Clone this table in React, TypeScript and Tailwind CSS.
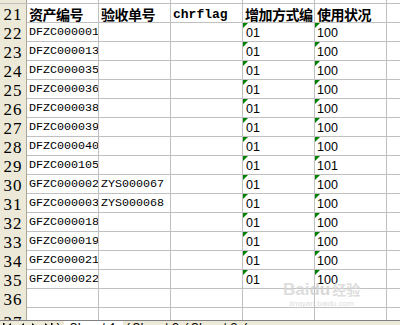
import React from "react";

type Row = { n: number; a?: string; b?: string; c?: string; d?: string; e?: string; tri?: boolean; head?: boolean };

const rows: Row[] = [
  { n: 21, a: "资产编号", b: "验收单号", c: "chrflag", d: "增加方式编", e: "使用状况", head: true },
  { n: 22, a: "DFZC000001", d: "01", e: "100", tri: true },
  { n: 23, a: "DFZC000013", d: "01", e: "100", tri: true },
  { n: 24, a: "DFZC000035", d: "01", e: "100", tri: true },
  { n: 25, a: "DFZC000036", d: "01", e: "100", tri: true },
  { n: 26, a: "DFZC000038", d: "01", e: "100", tri: true },
  { n: 27, a: "DFZC000039", d: "01", e: "100", tri: true },
  { n: 28, a: "DFZC000040", d: "01", e: "100", tri: true },
  { n: 29, a: "DFZC000105", d: "01", e: "101", tri: true },
  { n: 30, a: "GFZC000002", b: "ZYS000067", d: "01", e: "100", tri: true },
  { n: 31, a: "GFZC000003", b: "ZYS000068", d: "01", e: "100", tri: true },
  { n: 32, a: "GFZC000018", d: "01", e: "100", tri: true },
  { n: 33, a: "GFZC000019", d: "01", e: "100", tri: true },
  { n: 34, a: "GFZC000021", d: "01", e: "100", tri: true },
  { n: 35, a: "GFZC000022", d: "01", e: "100", tri: true },
  { n: 36 },
];

const cjk = "font-['SimSun','Noto_Sans_CJK_SC',sans-serif]";
const mono = "font-['Liberation_Mono','Noto_Sans_CJK_SC',monospace]";
const sans = "font-['Liberation_Sans',Arial,sans-serif]";
const serif = "font-['Liberation_Serif',serif]";

function Tri() {
  return (
    <span className="absolute left-0 top-0 h-0 w-0 border-t-[5px] border-r-[5px] border-t-[#008000] border-r-transparent" />
  );
}

function HeadCell({ text, bold }: { text?: string; bold?: boolean }) {
  return (
    <div className="relative flex items-center overflow-hidden whitespace-nowrap border-r border-[#c0c0c0] pl-[2px] pt-[1px]">
      {text && (
        <span className={bold ? `${cjk} text-[14px] font-bold leading-none tracking-[-0.5px]` : `${mono} text-[11.7px] leading-none`}>
          {text}
        </span>
      )}
    </div>
  );
}

function SpreadRow({ r }: { r: Row }) {
  return (
    <div className="grid h-[19px] grid-cols-[27px_72px_72px_72px_72px_72px_1fr] border-b border-[#c0c0c0]">
      <div className={`${serif} flex items-center justify-center border-r border-[#aca899] bg-[#ece9d8] pt-[2px] text-[17px] leading-none tracking-[1px] text-black`}>
        {r.n}
      </div>
      {r.head ? (
        <>
          <HeadCell text={r.a} bold />
          <HeadCell text={r.b} bold />
          <div className="flex items-center overflow-hidden whitespace-nowrap border-r border-[#c0c0c0] pl-[2px] pt-[1px]">
            <span className={`${mono} text-[13px] font-bold leading-none`}>{r.c}</span>
          </div>
          <HeadCell text={r.d} bold />
          <HeadCell text={r.e} bold />
        </>
      ) : (
        <>
          <HeadCell text={r.a} />
          <HeadCell text={r.b} />
          <HeadCell text={r.c} />
          <div className="relative flex items-center border-r border-[#c0c0c0] pl-[3px] pt-[2px]">
            {r.tri && <Tri />}
            <span className={`${sans} text-[12.5px] leading-none`}>{r.d}</span>
          </div>
          <div className="relative flex items-center border-r border-[#c0c0c0] pl-[2px] pt-[2px]">
            {r.tri && <Tri />}
            <span className={`${sans} text-[12.5px] leading-none`}>{r.e}</span>
          </div>
        </>
      )}
      <div />
    </div>
  );
}

function EmptyRow({ n, h }: { n: number; h: string }) {
  return (
    <div className={`grid ${h} grid-cols-[27px_72px_72px_72px_72px_72px_1fr] overflow-hidden border-b border-[#c0c0c0]`}>
      <div className={`${serif} flex items-end justify-center overflow-hidden border-r border-[#aca899] bg-[#ece9d8] text-[17px] leading-none tracking-[1px]`}>
        {n}
      </div>
      <div className="border-r border-[#c0c0c0]" />
      <div className="border-r border-[#c0c0c0]" />
      <div className="border-r border-[#c0c0c0]" />
      <div className="border-r border-[#c0c0c0]" />
      <div className="border-r border-[#c0c0c0]" />
      <div />
    </div>
  );
}

export default function App() {
  return (
    <div className="relative flex h-[325px] w-[400px] flex-col overflow-hidden bg-white text-black">
      {/* row 20, cut off at the top */}
      <div className="grid h-[4px] grid-cols-[27px_72px_72px_72px_72px_72px_1fr] border-b border-[#c0c0c0]">
        <div className="border-r border-[#aca899] bg-[#ece9d8]" />
        <div className="border-r border-[#c0c0c0]" />
        <div className="border-r border-[#c0c0c0]" />
        <div className="border-r border-[#c0c0c0]" />
        <div className="border-r border-[#c0c0c0]" />
        <div className="border-r border-[#c0c0c0]" />
        <div />
      </div>

      {rows.map((r) => (
        <SpreadRow key={r.n} r={r} />
      ))}

      {/* row 37, cut off by the tab bar */}
      <div className="grid h-[12px] grid-cols-[27px_72px_72px_72px_72px_72px_1fr] overflow-hidden">
        <div className={`${serif} flex items-start justify-center overflow-hidden border-r border-[#aca899] bg-[#ece9d8] pt-[6px] text-[17px] leading-none tracking-[1px]`}>
          37
        </div>
        <div className="border-r border-[#c0c0c0]" />
        <div className="border-r border-[#c0c0c0]" />
        <div className="border-r border-[#c0c0c0]" />
        <div className="border-r border-[#c0c0c0]" />
        <div className="border-r border-[#c0c0c0]" />
        <div />
      </div>

      {/* sheet tabs */}
      <div className="flex h-[5px] items-start overflow-hidden border-t border-[#808080] bg-[#ece9d8]">
        <div className="flex w-[56px] items-start gap-[6px] pl-[3px] pt-[2px]">
          <svg width="9" height="8" viewBox="0 0 9 8">
            <rect x="0" y="0" width="1.5" height="8" fill="#000" />
            <polygon points="8,0 3,4 8,8" fill="#000" />
          </svg>
          <svg width="7" height="8" viewBox="0 0 7 8">
            <polygon points="6,0 1,4 6,8" fill="#000" />
          </svg>
          <svg width="7" height="8" viewBox="0 0 7 8">
            <polygon points="1,0 6,4 1,8" fill="#000" />
          </svg>
          <svg width="9" height="8" viewBox="0 0 9 8">
            <polygon points="1,0 6,4 1,8" fill="#000" />
            <rect x="7" y="0" width="1.5" height="8" fill="#000" />
          </svg>
        </div>
        <div className={`${mono} flex items-start whitespace-nowrap text-[13px] leading-none`}>
          <span className="pt-[1px]">\</span>
          <span className="bg-white px-[6px] pt-[1px]">Sheet1</span>
          <span className="pt-[1px]">/</span>
          <span className="px-[2px] pt-[1px]">Sheet2</span>
          <span className="pt-[1px]">/</span>
          <span className="px-[2px] pt-[1px]">Sheet3</span>
          <span className="pt-[1px]">/</span>
        </div>
      </div>

      {/* watermark */}
      <div className="pointer-events-none absolute left-[283px] top-[281px] flex flex-col items-center text-[#d6d6d6] opacity-80">
        <span className={`${sans} text-[17px] font-bold leading-none`}>
          Bai<span className="text-[#cfcfcf]">du</span>
          <span className={`${cjk} ml-[2px] text-[14px]`}>经验</span>
        </span>
        <span className={`${sans} mt-[2px] text-[8px] leading-none`}>jingyan.baidu.com</span>
      </div>
    </div>
  );
}
